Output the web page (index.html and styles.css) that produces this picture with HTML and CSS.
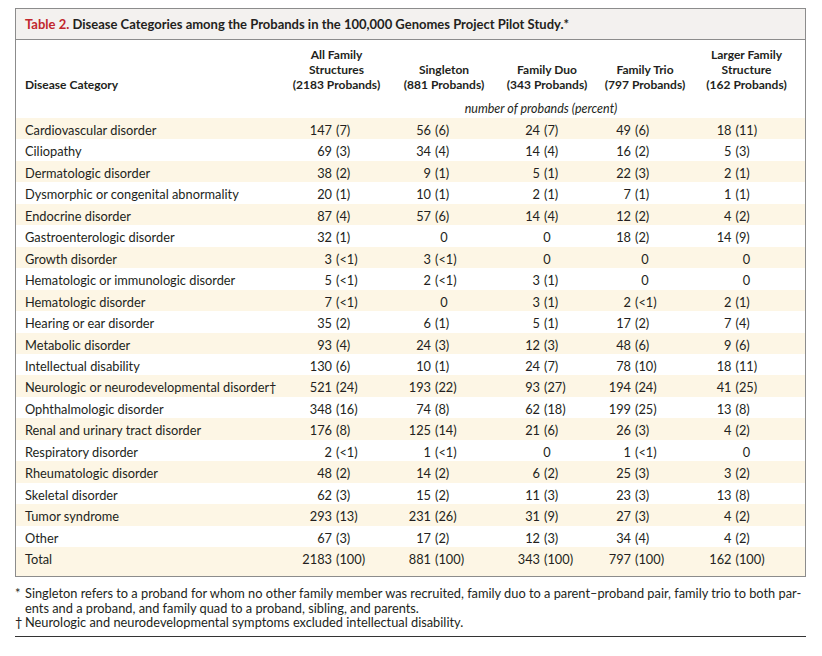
FILE: index.html
```html
<!DOCTYPE html>
<html>
<head>
<meta charset="utf-8">
<link rel="stylesheet" href="styles.css">
</head>
<body>
<div class="page">
  <div class="box">
    <div class="title"><span class="tnum">Table 2.</span> Disease Categories among the Probands in the 100,000 Genomes Project Pilot Study.*</div>
    <table class="tbl">
      <colgroup>
        <col class="c0"><col class="c1"><col class="c2"><col class="c3"><col class="c4"><col class="c5">
      </colgroup>
      <thead>
        <tr class="hrow">
          <th class="lab">Disease Category</th>
          <th>All Family<br>Structures<br>(2183 Probands)</th>
          <th>Singleton<br>(881 Probands)</th>
          <th>Family Duo<br>(343 Probands)</th>
          <th>Family Trio<br>(797 Probands)</th>
          <th class="last">Larger Family<br>Structure<br>(162 Probands)</th>
        </tr>
        <tr class="unit">
          <th></th>
          <th colspan="5" class="units">number of probands (percent)</th>
        </tr>
      </thead>
      <tbody>
        <tr><td class="lab">Cardiovascular disorder</td><td class="k1"><div class="v"><span>147</span><span>(7)</span></div></td><td class="k2"><div class="v"><span>56</span><span>(6)</span></div></td><td class="k3"><div class="v"><span>24</span><span>(7)</span></div></td><td class="k4"><div class="v"><span>49</span><span>(6)</span></div></td><td class="k5"><div class="v"><span>18</span><span>(11)</span></div></td></tr>
        <tr><td class="lab">Ciliopathy</td><td class="k1"><div class="v"><span>69</span><span>(3)</span></div></td><td class="k2"><div class="v"><span>34</span><span>(4)</span></div></td><td class="k3"><div class="v"><span>14</span><span>(4)</span></div></td><td class="k4"><div class="v"><span>16</span><span>(2)</span></div></td><td class="k5"><div class="v"><span>5</span><span>(3)</span></div></td></tr>
        <tr><td class="lab">Dermatologic disorder</td><td class="k1"><div class="v"><span>38</span><span>(2)</span></div></td><td class="k2"><div class="v"><span>9</span><span>(1)</span></div></td><td class="k3"><div class="v"><span>5</span><span>(1)</span></div></td><td class="k4"><div class="v"><span>22</span><span>(3)</span></div></td><td class="k5"><div class="v"><span>2</span><span>(1)</span></div></td></tr>
        <tr><td class="lab">Dysmorphic or congenital abnormality</td><td class="k1"><div class="v"><span>20</span><span>(1)</span></div></td><td class="k2"><div class="v"><span>10</span><span>(1)</span></div></td><td class="k3"><div class="v"><span>2</span><span>(1)</span></div></td><td class="k4"><div class="v"><span>7</span><span>(1)</span></div></td><td class="k5"><div class="v"><span>1</span><span>(1)</span></div></td></tr>
        <tr><td class="lab">Endocrine disorder</td><td class="k1"><div class="v"><span>87</span><span>(4)</span></div></td><td class="k2"><div class="v"><span>57</span><span>(6)</span></div></td><td class="k3"><div class="v"><span>14</span><span>(4)</span></div></td><td class="k4"><div class="v"><span>12</span><span>(2)</span></div></td><td class="k5"><div class="v"><span>4</span><span>(2)</span></div></td></tr>
        <tr><td class="lab">Gastroenterologic disorder</td><td class="k1"><div class="v"><span>32</span><span>(1)</span></div></td><td class="z">0</td><td class="z">0</td><td class="k4"><div class="v"><span>18</span><span>(2)</span></div></td><td class="k5"><div class="v"><span>14</span><span>(9)</span></div></td></tr>
        <tr><td class="lab">Growth disorder</td><td class="k1"><div class="v"><span>3</span><span>(&lt;1)</span></div></td><td class="k2"><div class="v"><span>3</span><span>(&lt;1)</span></div></td><td class="z">0</td><td class="z">0</td><td class="z z5">0</td></tr>
        <tr><td class="lab">Hematologic or immunologic disorder</td><td class="k1"><div class="v"><span>5</span><span>(&lt;1)</span></div></td><td class="k2"><div class="v"><span>2</span><span>(&lt;1)</span></div></td><td class="k3"><div class="v"><span>3</span><span>(1)</span></div></td><td class="z">0</td><td class="z z5">0</td></tr>
        <tr><td class="lab">Hematologic disorder</td><td class="k1"><div class="v"><span>7</span><span>(&lt;1)</span></div></td><td class="z">0</td><td class="k3"><div class="v"><span>3</span><span>(1)</span></div></td><td class="k4"><div class="v"><span>2</span><span>(&lt;1)</span></div></td><td class="k5"><div class="v"><span>2</span><span>(1)</span></div></td></tr>
        <tr><td class="lab">Hearing or ear disorder</td><td class="k1"><div class="v"><span>35</span><span>(2)</span></div></td><td class="k2"><div class="v"><span>6</span><span>(1)</span></div></td><td class="k3"><div class="v"><span>5</span><span>(1)</span></div></td><td class="k4"><div class="v"><span>17</span><span>(2)</span></div></td><td class="k5"><div class="v"><span>7</span><span>(4)</span></div></td></tr>
        <tr><td class="lab">Metabolic disorder</td><td class="k1"><div class="v"><span>93</span><span>(4)</span></div></td><td class="k2"><div class="v"><span>24</span><span>(3)</span></div></td><td class="k3"><div class="v"><span>12</span><span>(3)</span></div></td><td class="k4"><div class="v"><span>48</span><span>(6)</span></div></td><td class="k5"><div class="v"><span>9</span><span>(6)</span></div></td></tr>
        <tr><td class="lab">Intellectual disability</td><td class="k1"><div class="v"><span>130</span><span>(6)</span></div></td><td class="k2"><div class="v"><span>10</span><span>(1)</span></div></td><td class="k3"><div class="v"><span>24</span><span>(7)</span></div></td><td class="k4"><div class="v"><span>78</span><span>(10)</span></div></td><td class="k5"><div class="v"><span>18</span><span>(11)</span></div></td></tr>
        <tr><td class="lab">Neurologic or neurodevelopmental disorder†</td><td class="k1"><div class="v"><span>521</span><span>(24)</span></div></td><td class="k2"><div class="v"><span>193</span><span>(22)</span></div></td><td class="k3"><div class="v"><span>93</span><span>(27)</span></div></td><td class="k4"><div class="v"><span>194</span><span>(24)</span></div></td><td class="k5"><div class="v"><span>41</span><span>(25)</span></div></td></tr>
        <tr><td class="lab">Ophthalmologic disorder</td><td class="k1"><div class="v"><span>348</span><span>(16)</span></div></td><td class="k2"><div class="v"><span>74</span><span>(8)</span></div></td><td class="k3"><div class="v"><span>62</span><span>(18)</span></div></td><td class="k4"><div class="v"><span>199</span><span>(25)</span></div></td><td class="k5"><div class="v"><span>13</span><span>(8)</span></div></td></tr>
        <tr><td class="lab">Renal and urinary tract disorder</td><td class="k1"><div class="v"><span>176</span><span>(8)</span></div></td><td class="k2"><div class="v"><span>125</span><span>(14)</span></div></td><td class="k3"><div class="v"><span>21</span><span>(6)</span></div></td><td class="k4"><div class="v"><span>26</span><span>(3)</span></div></td><td class="k5"><div class="v"><span>4</span><span>(2)</span></div></td></tr>
        <tr><td class="lab">Respiratory disorder</td><td class="k1"><div class="v"><span>2</span><span>(&lt;1)</span></div></td><td class="k2"><div class="v"><span>1</span><span>(&lt;1)</span></div></td><td class="z">0</td><td class="k4"><div class="v"><span>1</span><span>(&lt;1)</span></div></td><td class="z z5">0</td></tr>
        <tr><td class="lab">Rheumatologic disorder</td><td class="k1"><div class="v"><span>48</span><span>(2)</span></div></td><td class="k2"><div class="v"><span>14</span><span>(2)</span></div></td><td class="k3"><div class="v"><span>6</span><span>(2)</span></div></td><td class="k4"><div class="v"><span>25</span><span>(3)</span></div></td><td class="k5"><div class="v"><span>3</span><span>(2)</span></div></td></tr>
        <tr><td class="lab">Skeletal disorder</td><td class="k1"><div class="v"><span>62</span><span>(3)</span></div></td><td class="k2"><div class="v"><span>15</span><span>(2)</span></div></td><td class="k3"><div class="v"><span>11</span><span>(3)</span></div></td><td class="k4"><div class="v"><span>23</span><span>(3)</span></div></td><td class="k5"><div class="v"><span>13</span><span>(8)</span></div></td></tr>
        <tr><td class="lab">Tumor syndrome</td><td class="k1"><div class="v"><span>293</span><span>(13)</span></div></td><td class="k2"><div class="v"><span>231</span><span>(26)</span></div></td><td class="k3"><div class="v"><span>31</span><span>(9)</span></div></td><td class="k4"><div class="v"><span>27</span><span>(3)</span></div></td><td class="k5"><div class="v"><span>4</span><span>(2)</span></div></td></tr>
        <tr><td class="lab">Other</td><td class="k1"><div class="v"><span>67</span><span>(3)</span></div></td><td class="k2"><div class="v"><span>17</span><span>(2)</span></div></td><td class="k3"><div class="v"><span>12</span><span>(3)</span></div></td><td class="k4"><div class="v"><span>34</span><span>(4)</span></div></td><td class="k5"><div class="v"><span>4</span><span>(2)</span></div></td></tr>
        <tr class="total"><td class="lab">Total</td><td class="k1"><div class="v"><span>2183</span><span>(100)</span></div></td><td class="k2"><div class="v"><span>881</span><span>(100)</span></div></td><td class="k3"><div class="v"><span>343</span><span>(100)</span></div></td><td class="k4"><div class="v"><span>797</span><span>(100)</span></div></td><td class="k5"><div class="v"><span>162</span><span>(100)</span></div></td></tr>
      </tbody>
    </table>
  </div>
  <div class="notes">
    <div class="note"><span class="mark">*</span><span class="ntext">Singleton refers to a proband for whom no other family member was recruited, family duo to a parent–proband pair, family trio to both par-<br>ents and a proband, and family quad to a proband, sibling, and parents.</span></div>
    <div class="note"><span class="mark">†</span><span class="ntext">Neurologic and neurodevelopmental symptoms excluded intellectual disability.</span></div>
  </div>
</div>
</body>
</html>
```

FILE: styles.css
```css
html, body {
  margin: 0;
  padding: 0;
  background: #ffffff;
}
body {
  font-family: "Lato", "Open Sans", sans-serif;
  color: #231f20;
  font-size: 12.8px;
}
.page {
  padding: 8px 16px 0 15px;
  width: 791px;
}
.box {
  border: 1.5px solid #8c8c8c;
  box-sizing: border-box;
  width: 791px;
}
.title {
  background: #f3f1ef;
  border-bottom: 1.5px solid #8c8c8c;
  height: 30px;
  line-height: 31px;
  padding-left: 9px;
  font-weight: 700;
  font-size: 13px;
}
.tnum {
  color: #c1272d;
}
.tbl {
  width: 100%;
  border-collapse: collapse;
  table-layout: fixed;
}
.c0 { width: 266px; }
.c1 { width: 109px; }
.c2 { width: 106px; }
.c3 { width: 100px; }
.c4 { width: 96px; }
.c5 { width: auto; }
.hrow th {
  font-weight: 700;
  font-size: 12px;
  text-align: center;
  vertical-align: bottom;
  line-height: 15px;
  padding: 7px 0 0 0;
}
.hrow th.lab {
  text-align: left;
  padding-left: 9px;
}
.hrow th.last {
  padding-right: 5px;
}
.unit th {
  height: 26px;
  padding: 0;
}
.units {
  font-weight: 400;
  font-style: italic;
  font-size: 12.5px;
  text-align: center;
  vertical-align: top;
  line-height: 15px;
  padding-top: 9px !important;
  padding-right: 5px !important;
  box-sizing: border-box;
}
tbody tr {
  height: 21.45px;
}
tbody tr:nth-child(odd) {
  background: #fdf6e5;
}
tbody td {
  padding: 3px 0 0 0;
  line-height: 18.45px;
  white-space: nowrap;
}
td.lab {
  padding-left: 9px;
}
td.z {
  text-align: center;
}
td.z5 {
  padding-right: 5px;
}
.v {
  display: grid;
  grid-template-columns: 1fr 1fr;
  column-gap: 4px;
}
.v span:first-child {
  text-align: right;
}
.v span:last-child {
  text-align: left;
}
.k1 .v { margin-right: 5px; }
.k2 .v { margin-right: 22px; }
.k3 .v { margin-right: 10px; }
.k4 .v { margin-right: 24px; }
.k5 .v { margin-right: 31px; }
tr.total td {
  vertical-align: top;
  height: 26px;
}
.notes {
  margin-top: 9px;
  padding-bottom: 6px;
  border-bottom: 1.5px solid #333333;
  font-size: 12.8px;
  line-height: 14.5px;
}
.note {
  display: flex;
}
.mark {
  width: 10px;
  flex: none;
  text-align: left;
}
.ntext {
  flex: 1;
}
```
